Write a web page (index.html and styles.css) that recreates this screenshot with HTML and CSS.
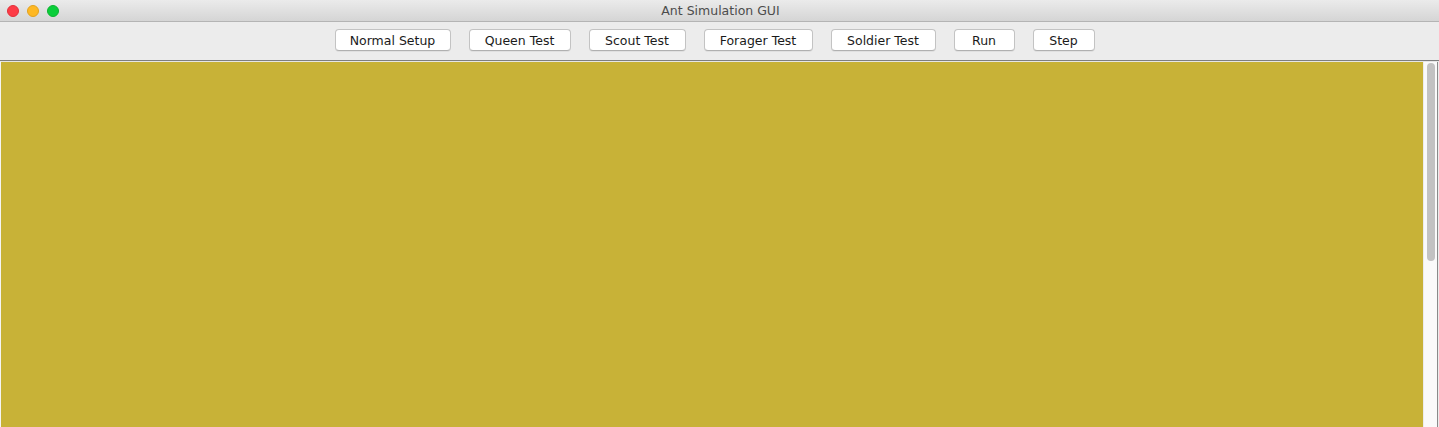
FILE: index.html
```html
<!DOCTYPE html>
<html>
<head>
<meta charset="utf-8">
<title>Ant Simulation GUI</title>
<link rel="stylesheet" href="styles.css">
</head>
<body>
<div class="window">
  <div class="titlebar">
    <div class="lights">
      <span class="light red"></span>
      <span class="light yellow"></span>
      <span class="light green"></span>
    </div>
    <div class="title">Ant Simulation GUI</div>
  </div>
  <div class="toolbar">
    <button class="btn w-normal">Normal Setup</button>
    <button class="btn w-queen">Queen Test</button>
    <button class="btn w-scout">Scout Test</button>
    <button class="btn w-forager">Forager Test</button>
    <button class="btn w-soldier">Soldier Test</button>
    <button class="btn w-run">Run</button>
    <button class="btn w-step">Step</button>
  </div>
  <div class="content">
    <div class="canvas"></div>
    <div class="scrollbar"><div class="thumb"></div></div>
  </div>
</div>
</body>
</html>
```
FILE: styles.css
```css
html, body {
  margin: 0;
  padding: 0;
  height: 100%;
  overflow: hidden;
  background: #ececec;
}
.window {
  display: flex;
  flex-direction: column;
  height: 427px;
  font-family: "DejaVu Sans", "Liberation Sans", sans-serif;
}
.titlebar {
  height: 21px;
  border-bottom: 1px solid #b4b4b4;
  background: linear-gradient(#ebebeb, #d5d5d5);
  display: flex;
  align-items: center;
  justify-content: center;
  position: relative;
}
.lights {
  position: absolute;
  left: 7px;
  top: 5px;
  display: flex;
  gap: 8px;
}
.light {
  width: 12px;
  height: 12px;
  border-radius: 50%;
  display: block;
  box-sizing: border-box;
}
.red { background: #fd3b46; border: 1px solid #e2303a; }
.yellow { background: #feb823; border: 1px solid #e3a21c; }
.green { background: #0ace3a; border: 1px solid #0cb32f; }
.title {
  font-size: 12.5px;
  color: #4c4c4c;
  letter-spacing: 0;
  padding-left: 2px;
}
.toolbar {
  height: 39px;
  border-bottom: 1px solid #7f7f7f;
  display: flex;
  align-items: flex-start;
  justify-content: center;
  gap: 18px;
  box-sizing: border-box;
  padding-top: 7px;
  padding-right: 10px;
  background: #ececec;
}
.btn {
  height: 22px;
  box-sizing: border-box;
  background: #ffffff;
  border: 1px solid #c3c3c3;
  border-bottom-color: #b0b0b0;
  border-radius: 4px;
  font-family: "DejaVu Sans", "Liberation Sans", sans-serif;
  font-size: 12.5px;
  color: #1a1a1a;
  padding: 0;
  margin: 0;
  box-shadow: 0 1px 0 rgba(0,0,0,0.05);
}
.w-normal { width: 116px; }
.w-queen { width: 102px; }
.w-scout { width: 97px; }
.w-forager { width: 109px; }
.w-soldier { width: 105px; }
.w-run { width: 61px; }
.w-step { width: 62px; }
.content {
  flex: 1;
  display: flex;
  border-top: 1px solid #e6e6e6;
  border-left: 1px solid #f4f4f4;
}
.canvas {
  flex: 1;
  background: #c8b237;
}
.scrollbar {
  width: 15px;
  background: #fafafa;
  border-left: 1px solid #ececec;
  border-right: 1px solid #8a8a8a;
  box-sizing: border-box;
  margin-right: 1px;
  padding: 1px 2px 0 3px;
}
.thumb {
  height: 198px;
  background: #c2c2c2;
  border-radius: 4px;
  width: 8px;
}
```
